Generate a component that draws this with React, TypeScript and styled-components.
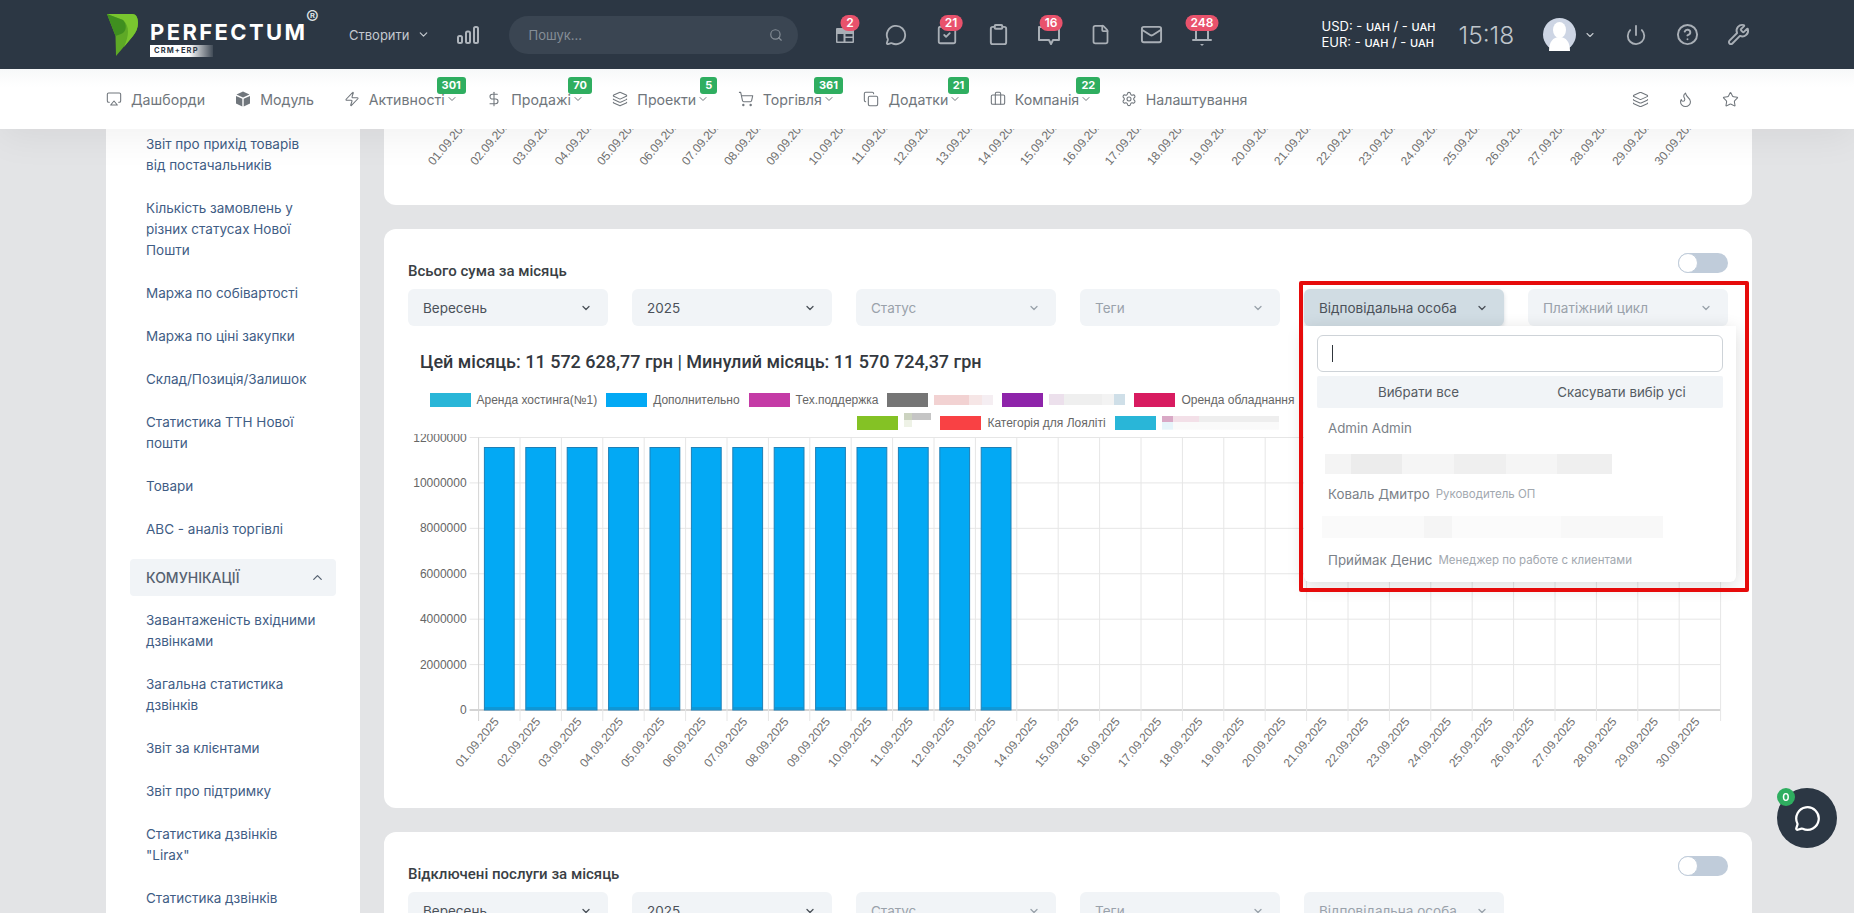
import styled, { createGlobalStyle } from "styled-components";
import {
  Airplay,
  Briefcase,
  ChevronDown,
  ChevronUp,
  CircleHelp,
  Clipboard,
  Copy,
  DollarSign,
  File,
  Flame,
  Layers,
  Mail,
  MessageCircle,
  Power,
  Search,
  Settings,
  ShoppingCart,
  SquareCheck,
  Star,
  Wrench,
  Zap,
} from "lucide-react";

const GlobalStyle = createGlobalStyle`
  html, body {
    margin: 0;
    height: 100%;
    overflow: hidden;
    background: #e3e4e6;
  }
  body {
    font-family: Inter, "Liberation Sans", sans-serif;
    font-size: 13.5px;
  }
`;

const Page = styled.div`
  display: flex;
  flex-direction: column;
  height: 100vh;
  overflow: hidden;
`;

const TopBars = styled.div`
  position: relative;
  z-index: 5;
  flex: none;
  box-shadow: 0 8px 36px rgba(0, 0, 0, 0.06);
`;

const HeaderBar = styled.header`
  display: flex;
  align-items: center;
  height: 69px;
  padding-left: 107px;
  background: #2c3744;
  color: #c4c9cf;
`;

const Logo = styled.div`
  position: relative;
  display: flex;
  align-items: flex-start;
  gap: 12px;
  width: 213px;
  height: 42px;
  flex: none;
`;

const LogoGlyph = styled.svg`
  flex: none;
`;

const LogoWords = styled.div`
  display: flex;
  flex-direction: column;
  padding-top: 8px;
`;

const LogoName = styled.span`
  color: #fff;
  font-family: Inter, sans-serif;
  font-size: 22px;
  line-height: 20px;
  font-weight: 700;
  letter-spacing: 2.4px;
`;

const LogoTag = styled.span`
  width: 63px;
  height: 12px;
  margin-top: 3px;
  padding-left: 4px;
  box-sizing: border-box;
  background: linear-gradient(90deg, #fff 62%, rgba(255, 255, 255, 0.1));
  color: #2c3744;
  font-size: 7.5px;
  line-height: 12px;
  font-weight: 700;
  letter-spacing: 1.1px;
`;

const LogoMark = styled.sup`
  position: absolute;
  left: 199px;
  top: -6px;
  margin: 0;
  color: #dfe2e5;
  font-size: 19px;
  line-height: 19px;
`;

const CreateButton = styled.div`
  display: flex;
  align-items: center;
  gap: 7px;
  margin-left: 29px;
  font-size: 13px;
  flex: none;
`;

const BarsIcon = styled.svg`
  margin-left: 27px;
  flex: none;
`;

const SearchBox = styled.div`
  display: flex;
  align-items: center;
  justify-content: space-between;
  width: 289px;
  height: 38px;
  margin-left: 30px;
  padding: 0 15px 0 20px;
  box-sizing: border-box;
  border-radius: 19px;
  background: #3a4552;
  color: #858d96;
  font-size: 13px;
  flex: none;
`;

const IconRow = styled.div<{ $left: number }>`
  display: flex;
  margin-left: ${({ $left }) => $left}px;
  flex: none;
`;

const IconButton = styled.div`
  position: relative;
  display: flex;
  align-items: center;
  justify-content: center;
  width: 51px;
  height: 40px;
  color: #a9afb6;
`;

const CountBadge = styled.span<{ $shift: number }>`
  position: absolute;
  top: 0;
  left: 50%;
  min-width: 19px;
  height: 16px;
  padding: 0 5px;
  box-sizing: border-box;
  transform: translateX(calc(-50% + ${({ $shift }) => $shift}px));
  border-radius: 8px;
  background: #e9526c;
  color: #fff;
  font-size: 12px;
  line-height: 16px;
  font-weight: 600;
  text-align: center;
`;

const Rates = styled.div`
  width: 112px;
  margin-left: 94px;
  color: #fff;
  font-size: 13px;
  line-height: 14.5px;
  white-space: nowrap;
  flex: none;

  small {
    font-size: 11px;
    font-weight: 500;
  }
`;

const Clock = styled.div`
  margin-left: 25px;
  width: 56px;
  color: #bfc5cb;
  font-size: 24.5px;
  font-weight: 300;
  flex: none;
`;

const UserBlock = styled.div`
  display: flex;
  align-items: center;
  gap: 8px;
  margin-left: 28px;
  color: #c4c9cf;
  flex: none;
`;

const NavBar = styled.nav`
  display: flex;
  align-items: center;
  height: 60px;
  padding: 0 115px 0 106px;
  background: linear-gradient(#f7f8f9, #fff 30%);
`;

const NavList = styled.div`
  display: flex;
  align-items: center;
  gap: 30px;
`;

const NavItem = styled.div`
  position: relative;
  display: flex;
  align-items: center;
  color: #70767c;
  font-size: 14.2px;
  white-space: nowrap;

  & > svg:first-child {
    margin-right: 9px;
  }
`;

const NavChevron = styled(ChevronDown)`
  flex: none;
  margin: 0 -1.5px 0 1px;
`;

const NavBadge = styled.span`
  position: absolute;
  top: -14px;
  right: -9.5px;
  min-width: 5px;
  height: 17px;
  padding: 0 5px;
  border-radius: 3px;
  background: #2fae60;
  color: #fff;
  font-size: 11px;
  line-height: 17px;
  font-weight: 700;
  text-align: center;
`;

const NavTools = styled.div`
  display: flex;
  gap: 28px;
  margin-left: auto;
  color: #70767c;
`;

const Body = styled.div`
  flex: 1;
  min-height: 0;
  display: grid;
  grid-template-columns: 254px 1368px;
  gap: 24px;
  padding-left: 106px;
  overflow: hidden;
`;

const Sidebar = styled.aside`
  padding: 5px 24px 0;
  background: #fff;
  overflow: hidden;
`;

const SideLink = styled.a`
  display: block;
  margin: 0 0 22px;
  padding: 0 18px 0 16px;
  color: #3f5d85;
  font-size: 13.5px;
  line-height: 21px;
`;

const SideSection = styled.div`
  display: flex;
  align-items: center;
  justify-content: space-between;
  height: 37px;
  margin: -3px 0 14px;
  padding: 0 11px 0 16px;
  border-radius: 4px;
  background: #f1f4f7;
  color: #556170;
  font-weight: 500;
  font-size: 14px;
`;

const Main = styled.main`
  display: flex;
  flex-direction: column;
  gap: 24px;
  overflow: hidden;
`;

const Card = styled.section<{ $cut?: boolean }>`
  flex: none;
  padding: ${({ $cut }) => ($cut ? "0 24px" : "24px")};
  border-radius: ${({ $cut }) => ($cut ? "0 0 12px 12px" : "12px")};
  background: #fff;
  ${({ $cut }) => ($cut ? "height: 76px;" : "")}
`;

const CardHead = styled.div`
  display: flex;
  align-items: flex-start;
  justify-content: space-between;
  height: 27px;
  margin-bottom: 9px;
`;

const CardTitle = styled.h3`
  margin: 9px 0 0;
  color: #3a3f45;
  font-family: Roboto, sans-serif;
  font-size: 15px;
  line-height: 18px;
  font-weight: 500;
`;

const Toggle = styled.span`
  position: relative;
  display: block;
  width: 50px;
  height: 20px;
  border-radius: 10px;
  background: #c0ccda;

  &::before {
    content: "";
    position: absolute;
    left: 0;
    top: 0;
    width: 20px;
    height: 20px;
    box-sizing: border-box;
    border: 1px solid #c0ccda;
    border-radius: 50%;
    background: #fff;
  }
`;

const Filters = styled.div`
  display: grid;
  grid-template-columns: repeat(6, 200px);
  gap: 24px;
`;

const FilterCell = styled.div`
  position: relative;
`;

const SelectBox = styled.div<{ $open?: boolean; $empty?: boolean }>`
  display: flex;
  align-items: center;
  justify-content: space-between;
  height: 37px;
  padding: 0 16px 0 15px;
  box-sizing: border-box;
  border-radius: 6px;
  background: ${({ $open }) => ($open ? "#d0dce3" : "#f1f4f7")};
  box-shadow: ${({ $open }) => ($open ? "0 2px 4px rgba(60, 80, 100, 0.2)" : "none")};
  color: ${({ $empty }) => ($empty ? "#9aa2ab" : "#4b5159")};
  font-size: 13.5px;
`;

const SelectChevron = styled(ChevronDown)`
  flex: none;
`;

const DropPanel = styled.div`
  position: absolute;
  z-index: 3;
  left: 0;
  top: 37px;
  width: 432px;
  height: 256px;
  padding: 9px 13px 0;
  box-sizing: border-box;
  border-radius: 0 0 6px 6px;
  background: #fff;
  box-shadow: 0 4px 18px rgba(0, 0, 0, 0.14);
`;

const DropSearch = styled.div`
  display: flex;
  align-items: center;
  height: 37px;
  padding-left: 14px;
  box-sizing: border-box;
  border: 1px solid #ced3d8;
  border-radius: 6px;
`;

const Caret = styled.span`
  width: 1px;
  height: 17px;
  background: #30363c;
`;

const DropActions = styled.div`
  display: grid;
  grid-template-columns: 1fr 1fr;
  height: 32px;
  margin: 4px 0 3px;
  border-radius: 2px;
  background: #f1f4f7;
  color: #555b62;
  font-size: 13.3px;
  line-height: 32px;
  text-align: center;
`;

const DropRow = styled.div`
  display: flex;
  align-items: center;
  gap: 6px;
  height: 33px;
  padding-left: 11px;
  color: #7b8188;
  font-size: 13.3px;
`;

const RoleText = styled.span`
  color: #a2a8af;
  font-size: 11.5px;
`;

const Redacted = styled.div<{ $w: number; $h: number; $bg: string; $shift?: number; $lift?: number }>`
  width: ${({ $w }) => $w}px;
  height: ${({ $h }) => $h}px;
  margin-left: ${({ $shift }) => $shift ?? 0}px;
  margin-top: ${({ $lift }) => ($lift ? -2 * $lift : 0)}px;
  background: ${({ $bg }) => $bg};
  flex: none;
`;

const RedFrame = styled.div`
  position: absolute;
  z-index: 4;
  left: -5px;
  top: -8px;
  width: 450px;
  height: 311px;
  box-sizing: border-box;
  border: 4px solid #e60b0b;
  border-radius: 2px;
  pointer-events: none;
`;

const ChartHeading = styled.h2`
  margin: 25px 0 15px 12px;
  color: #33383e;
  font-family: Roboto, sans-serif;
  font-size: 18px;
  line-height: 22px;
  font-weight: 500;
`;

const LegendRow = styled.div`
  display: flex;
  justify-content: center;
  align-items: center;
  height: 23px;
  gap: 9px;
  white-space: nowrap;
`;

const LegendItem = styled.div`
  display: flex;
  align-items: center;
  gap: 6px;
  color: #666;
  font-family: "Liberation Sans", sans-serif;
  font-size: 12px;
`;

const Swatch = styled.span<{ $color: string }>`
  width: 41px;
  height: 14px;
  background: ${({ $color }) => $color};
  flex: none;
`;

const ChartSvg = styled.svg`
  display: block;
  font-family: "Liberation Sans", sans-serif;
  font-size: 12px;
`;

const ChatFab = styled.div`
  position: fixed;
  z-index: 6;
  right: 17px;
  bottom: 65px;
  display: flex;
  align-items: center;
  justify-content: center;
  width: 60px;
  height: 60px;
  border-radius: 50%;
  background: #2c3744;
  color: #fff;
`;

const ChatCount = styled.span`
  position: absolute;
  left: 0;
  top: 0;
  width: 18px;
  height: 18px;
  border-radius: 50%;
  background: #2fae60;
  color: #fff;
  font-size: 11px;
  line-height: 18px;
  font-weight: 600;
  text-align: center;
`;

const CalendarIcon = () => (
  <svg width="20" height="20" viewBox="0 0 20 20" fill="currentColor">
    <path d="M2 3h16a1 1 0 0 1 1 1v13a1 1 0 0 1-1 1H2a1 1 0 0 1-1-1V4a1 1 0 0 1 1-1Zm.5 6v7.500h6V9Zm8 0v2.500h7V9Zm0 4v3.500h7V13Z" fillRule="evenodd" />
  </svg>
);

const SpeechIcon = () => (
  <svg width="24" height="24" viewBox="0 0 24 24" fill="none" stroke="currentColor" strokeWidth="2" strokeLinejoin="round">
    <path d="M2 4h20v13h-6l-2 4-2-4H2Z" />
  </svg>
);

const BellIcon = () => (
  <svg width="22" height="24" viewBox="0 0 22 24" fill="none" stroke="currentColor" strokeWidth="2" strokeLinecap="round">
    <path d="M5 6v10M17 6v10M2 17h18" />
    <path d="M9 21h4l-2 2Z" fill="currentColor" stroke="none" />
  </svg>
);

const LogoIcon = () => (
  <LogoGlyph width="31" height="42" viewBox="0 0 31 42">
    <path d="M0 0H25C30 0 31 5 31 9C31 14 29 18 26 22L9 42L8.500 22Z" fill="#5ea926" />
    <path d="M0 0H25C30 0 31 5 31 9C31 14 29 18 26 22L17 33C22 22 23 12 16 6Z" fill="#79c52f" />
    <path d="M0 0L16 6C20 10 20 18 14 20L8.500 22Z" fill="#3f8f1f" />
  </LogoGlyph>
);

const CubeIcon = () => (
  <svg width="16" height="16" viewBox="0 0 16 16" fill="currentColor">
    <path d="M8 .5l6.500 3L8 6.500 1.500 3.500Z" />
    <path d="M1 5l6.300 2.800V15.500L1 12.500Z" />
    <path d="M15 5 8.700 7.800V15.500L15 12.500Z" />
  </svg>
);

const AvatarIcon = () => (
  <svg width="33" height="33" viewBox="0 0 33 33">
    <circle cx="16.500" cy="16.500" r="16.500" fill="#cdd5e4" />
    <ellipse cx="16.500" cy="12" rx="6.500" ry="8" fill="#fff" />
    <path d="M6 33c0-9 4-14 10.500-14S27 24 27 33Z" fill="#fff" />
  </svg>
);

const sideTop = [
  "Звіт про прихід товарів від постачальників",
  "Кількість замовлень у різних статусах Нової Пошти",
  "Маржа по собівартості",
  "Маржа по ціні закупки",
  "Склад/Позиція/Залишок",
  "Статистика ТТН Нової пошти",
  "Товари",
  "АВС - аналіз торгівлі",
];

const sideBottom = [
  "Завантаженість вхідними дзвінками",
  "Загальна статистика дзвінків",
  "Звіт за клієнтами",
  "Звіт про підтримку",
  'Статистика дзвінків "Lirax"',
  "Статистика дзвінків",
];

const navItems = [
  { Icon: Airplay, label: "Дашборди" },
  { Icon: CubeIcon, label: "Модуль" },
  { Icon: Zap, label: "Активності", badge: "301", more: true },
  { Icon: DollarSign, label: "Продажі", badge: "70", more: true },
  { Icon: Layers, label: "Проекти", badge: "5", more: true },
  { Icon: ShoppingCart, label: "Торгівля", badge: "361", more: true },
  { Icon: Copy, label: "Додатки", badge: "21", more: true },
  { Icon: Briefcase, label: "Компанія", badge: "22", more: true },
  { Icon: Settings, label: "Налаштування" },
];

const days = Array.from({ length: 30 }, (_, i) => `${String(i + 1).padStart(2, "0")}.09.2025`);

const PLOT_LEFT = 70.6;
const STEP = 41.4;
const ZERO_Y = 276;
const TOP_Y = 3.5;

const XLabels = ({ left, step, axis }: { left: number; step: number; axis: number }) => (
  <>
    {days.map((day, i) => (
      <text
        key={day}
        transform={`translate(${left + i * step + 21} ${axis + 12}) rotate(-50)`}
        textAnchor="end"
        fill="#707070"
      >
        {day}
      </text>
    ))}
  </>
);

const SumChart = () => (
  <ChartSvg width={1320} height={350} viewBox="0 0 1320 350">
    {[0, 1, 2, 3, 4, 5, 6].map((n) => {
      const y = ZERO_Y - (n * (ZERO_Y - TOP_Y)) / 6;
      return (
        <g key={n}>
          <line x1={PLOT_LEFT - 9} x2={PLOT_LEFT + 30 * STEP} y1={y} y2={y} stroke={n === 0 ? "#a8a8a8" : "#e6e6e6"} />
          <text x={PLOT_LEFT - 12} y={y + 4} textAnchor="end" fill="#666">
            {n * 2000000}
          </text>
        </g>
      );
    })}
    {Array.from({ length: 31 }, (_, i) => (
      <line
        key={i}
        x1={PLOT_LEFT + i * STEP}
        x2={PLOT_LEFT + i * STEP}
        y1={TOP_Y}
        y2={ZERO_Y + 11}
        stroke={i === 0 ? "#d4d4d4" : "#e6e6e6"}
      />
    ))}
    {days.slice(0, 13).map((day, i) => (
      <g key={day}>
        <rect
          x={PLOT_LEFT + i * STEP + 5.8}
          y={13.5}
          width={29.8}
          height={ZERO_Y - 13.5}
          fill="#03a9f4"
          stroke="#1f7fb5"
        />
        <rect x={PLOT_LEFT + i * STEP + 6.3} y={ZERO_Y - 2.5} width={28.8} height={1} fill="#1b86b8" />
      </g>
    ))}
    <XLabels left={PLOT_LEFT} step={STEP} axis={ZERO_Y} />
  </ChartSvg>
);

const Select = ({ text, empty }: { text: string; empty?: boolean }) => (
  <SelectBox $empty={empty}>
    {text}
    <SelectChevron size={12} strokeWidth={2.6} />
  </SelectBox>
);

export default function App() {
  return (
    <Page>
      <GlobalStyle />
      <TopBars>
        <HeaderBar>
          <Logo>
            <LogoIcon />
            <LogoWords>
              <LogoName>PERFECTUM</LogoName>
              <LogoTag>CRM+ERP</LogoTag>
            </LogoWords>
            <LogoMark>®</LogoMark>
          </Logo>
          <CreateButton>
            Створити
            <SelectChevron size={13} strokeWidth={2.2} />
          </CreateButton>
          <BarsIcon width="22" height="18" viewBox="0 0 22 18" fill="none" stroke="#aeb4bb" strokeWidth="2">
            <rect x="1" y="10" width="4" height="7" rx="1.500" />
            <rect x="9" y="5.500" width="4" height="11.500" rx="1.500" />
            <rect x="17" y="1" width="4" height="16" rx="1.500" />
          </BarsIcon>
          <SearchBox>
            Пошук...
            <Search size={14} />
          </SearchBox>
          <IconRow $left={22}>
            <IconButton>
              <CalendarIcon />
              <CountBadge $shift={5}>2</CountBadge>
            </IconButton>
            <IconButton>
              <MessageCircle size={22} />
            </IconButton>
            <IconButton>
              <SquareCheck size={22} />
              <CountBadge $shift={4}>21</CountBadge>
            </IconButton>
            <IconButton>
              <Clipboard size={23} />
            </IconButton>
            <IconButton>
              <SpeechIcon />
              <CountBadge $shift={2}>16</CountBadge>
            </IconButton>
            <IconButton>
              <File size={21} />
            </IconButton>
            <IconButton>
              <Mail size={23} />
            </IconButton>
            <IconButton>
              <BellIcon />
              <CountBadge $shift={0}>248</CountBadge>
            </IconButton>
          </IconRow>
          <Rates>
            USD: - <small>UAH</small> / - <small>UAH</small>
            <br />
            EUR: - <small>UAH</small> / - <small>UAH</small>
          </Rates>
          <Clock>15:18</Clock>
          <UserBlock>
            <AvatarIcon />
            <SelectChevron size={12} strokeWidth={2.2} />
          </UserBlock>
          <IconRow $left={15}>
            <IconButton>
              <Power size={22} />
            </IconButton>
            <IconButton>
              <CircleHelp size={23} />
            </IconButton>
            <IconButton>
              <Wrench size={23} />
            </IconButton>
          </IconRow>
        </HeaderBar>
        <NavBar>
          <NavList>
            {navItems.map(({ Icon, label, badge, more }) => (
              <NavItem key={label}>
                <Icon size={16} strokeWidth={1.6} />
                {label}
                {more && <NavChevron size={12} />}
                {badge && <NavBadge>{badge}</NavBadge>}
              </NavItem>
            ))}
          </NavList>
          <NavTools>
            <Layers size={17} strokeWidth={1.5} />
            <Flame size={17} strokeWidth={1.5} />
            <Star size={17} strokeWidth={1.5} />
          </NavTools>
        </NavBar>
      </TopBars>
      <Body>
        <Sidebar>
          {sideTop.map((item) => (
            <SideLink key={item}>{item}</SideLink>
          ))}
          <SideSection>
            КОМУНІКАЦІЇ
            <ChevronUp size={15} />
          </SideSection>
          {sideBottom.map((item) => (
            <SideLink key={item}>{item}</SideLink>
          ))}
        </Sidebar>
        <Main>
          <Card $cut>
            <ChartSvg width={1320} height={44} viewBox="0 0 1320 44">
              <XLabels left={43} step={42.3} axis={-21} />
            </ChartSvg>
          </Card>
          <Card>
            <CardHead>
              <CardTitle>Всього сума за місяць</CardTitle>
              <Toggle />
            </CardHead>
            <Filters>
              <Select text="Вересень" />
              <Select text="2025" />
              <Select text="Статус" empty />
              <Select text="Теги" empty />
              <FilterCell>
                <SelectBox $open>
                  Відповідальна особа
                  <SelectChevron size={12} strokeWidth={2.6} />
                </SelectBox>
                <DropPanel>
                  <DropSearch>
                    <Caret />
                  </DropSearch>
                  <DropActions>
                    <span>Вибрати все</span>
                    <span>Скасувати вибір усі</span>
                  </DropActions>
                  <DropRow>Admin Admin</DropRow>
                  <DropRow>
                    <Redacted
                      $w={287}
                      $h={20}
                      $shift={-3}
                      $lift={-3}
                      $bg="linear-gradient(90deg, #f4f4f4 9%, #ececec 9% 27%, #f5f5f5 27% 45%, #efefef 45% 63%, #f5f5f5 63% 81%, #efefef 81%)"
                    />
                  </DropRow>
                  <DropRow>
                    Коваль Дмитро
                    <RoleText>Руководитель ОП</RoleText>
                  </DropRow>
                  <DropRow>
                    <Redacted
                      $w={341}
                      $h={22}
                      $shift={-6}
                      $bg="linear-gradient(90deg, #fafafa 30%, #f5f5f5 30% 38%, #fbfbfb 38% 70%, #f8f8f8 70%)"
                    />
                  </DropRow>
                  <DropRow>
                    Приймак Денис
                    <RoleText>Менеджер по работе с клиентами</RoleText>
                  </DropRow>
                </DropPanel>
                <RedFrame />
              </FilterCell>
              <Select text="Платіжний цикл" empty />
            </Filters>
            <ChartHeading>Цей місяць: 11 572 628,77 грн | Минулий місяць: 11 570 724,37 грн</ChartHeading>
            <LegendRow>
              <LegendItem>
                <Swatch $color="#29b6d8" />
                Аренда хостинга(№1)
              </LegendItem>
              <LegendItem>
                <Swatch $color="#03a9f4" />
                Дополнительно
              </LegendItem>
              <LegendItem>
                <Swatch $color="#c43ba6" />
                Тех.поддержка
              </LegendItem>
              <LegendItem>
                <Swatch $color="#757575" />
                <Redacted $w={59} $h={10} $bg="linear-gradient(90deg, #f2d2d2 60%, #f6e6e6 60% 82%, #f5eef2 82%)" />
              </LegendItem>
              <LegendItem>
                <Swatch $color="#8e24aa" />
                <Redacted $w={76} $h={11} $bg="linear-gradient(90deg, #ece0ec 20%, #efefef 20% 70%, #f3f3f3 70% 86%, #cfdfe8 86%)" />
              </LegendItem>
              <LegendItem>
                <Swatch $color="#d81b60" />
                Оренда обладнання
              </LegendItem>
              <LegendItem>
                <Swatch $color="#5e35b1" />
                <Redacted $w={356} $h={10} $bg="#fff" />
              </LegendItem>
            </LegendRow>
            <LegendRow>
              <LegendItem>
                <Swatch $color="#84c225" />
                <Redacted
                  $w={27}
                  $h={14}
                  $lift={3}
                  $bg="linear-gradient(90deg, #ccd3c0 30%, #c5c5c5 30%) top / 100% 50% no-repeat, linear-gradient(90deg, #eef2e6 30%, #fff 30%) bottom / 100% 50% no-repeat"
                />
              </LegendItem>
              <LegendItem>
                <Swatch $color="#f94144" />
                Категорія для Лояліті
              </LegendItem>
              <LegendItem>
                <Swatch $color="#29b6d8" />
                <Redacted
                  $w={117}
                  $h={14}
                  $bg="linear-gradient(90deg, #d9a9c6 9%, #f3e0e8 9% 32%, #eee 32%) top / 100% 45% no-repeat, linear-gradient(90deg, #e6f4fa 9%, #fafafa 9%) bottom / 100% 55% no-repeat"
                />
              </LegendItem>
            </LegendRow>
            <SumChart />
          </Card>
          <Card>
            <CardHead>
              <CardTitle>Відключені послуги за місяць</CardTitle>
              <Toggle />
            </CardHead>
            <Filters>
              <Select text="Вересень" />
              <Select text="2025" />
              <Select text="Статус" empty />
              <Select text="Теги" empty />
              <Select text="Відповідальна особа" empty />
            </Filters>
          </Card>
        </Main>
      </Body>
      <ChatFab>
        <ChatCount>0</ChatCount>
        <MessageCircle size={27} />
      </ChatFab>
    </Page>
  );
}
